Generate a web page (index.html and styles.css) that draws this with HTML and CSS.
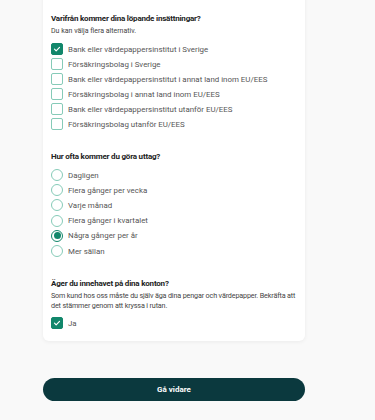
FILE: index.html
```html
<!DOCTYPE html>
<html lang="sv">
<head>
<meta charset="utf-8">
<link rel="stylesheet" href="styles.css">
</head>
<body>
<main class="page">
  <section class="card">
    <div class="group">
      <h2 class="q">Varifrån kommer dina löpande insättningar?</h2>
      <p class="hint">Du kan välja flera alternativ.</p>
      <ul class="opts">
        <li class="opt"><span class="cb on"><svg viewBox="0 0 12 12"><path d="M3 6.2l2 2 4-4.2" fill="none" stroke="#fff" stroke-width="1.4" stroke-linecap="round" stroke-linejoin="round"/></svg></span>Bank eller värdepappersinstitut i Sverige</li>
        <li class="opt"><span class="cb"></span>Försäkringsbolag i Sverige</li>
        <li class="opt"><span class="cb"></span>Bank eller värdepappersinstitut i annat land inom EU/EES</li>
        <li class="opt"><span class="cb"></span>Försäkringsbolag i annat land inom EU/EES</li>
        <li class="opt"><span class="cb"></span>Bank eller värdepappersinstitut utanför EU/EES</li>
        <li class="opt"><span class="cb"></span>Försäkringsbolag utanför EU/EES</li>
      </ul>
    </div>
    <div class="group">
      <h2 class="q">Hur ofta kommer du göra uttag?</h2>
      <ul class="opts radios">
        <li class="opt"><span class="rd"></span>Dagligen</li>
        <li class="opt"><span class="rd"></span>Flera gånger per vecka</li>
        <li class="opt"><span class="rd"></span>Varje månad</li>
        <li class="opt"><span class="rd"></span>Flera gånger i kvartalet</li>
        <li class="opt"><span class="rd on"></span>Några gånger per år</li>
        <li class="opt"><span class="rd"></span>Mer sällan</li>
      </ul>
    </div>
    <div class="group">
      <h2 class="q">Äger du innehavet på dina konton?</h2>
      <p class="desc">Som kund hos oss måste du själv äga dina pengar och värdepapper. Bekräfta att det stämmer genom att kryssa i rutan.</p>
      <ul class="opts last">
        <li class="opt"><span class="cb on"><svg viewBox="0 0 12 12"><path d="M3 6.2l2 2 4-4.2" fill="none" stroke="#fff" stroke-width="1.4" stroke-linecap="round" stroke-linejoin="round"/></svg></span>Ja</li>
      </ul>
    </div>
  </section>
  <button class="next" type="button">Gå vidare</button>
</main>
</body>
</html>
```

FILE: styles.css
```css
* { box-sizing: border-box; }
html, body { margin: 0; padding: 0; }
body {
  background: #f9f9f9;
  font-family: Roboto, "Liberation Sans", sans-serif;
  color: #333;
  width: 375px;
  height: 420px;
  overflow: hidden;
}
.page {
  width: 262px;
  margin-left: 43px;
  display: flex;
  flex-direction: column;
}
.card {
  margin-top: -10px;
  background: #fff;
  border-radius: 6px;
  box-shadow: 0 1px 4px rgba(0,0,0,0.06);
  padding: 22px 8px 10px 8px;
  display: flex;
  flex-direction: column;
  gap: 18.5px;
}
.q {
  margin: 0;
  font-size: 8px;
  line-height: 14px;
  font-weight: 700;
  letter-spacing: -0.2px;
  color: #222;
}
.hint, .desc {
  margin: 0;
  font-size: 7px;
  line-height: 11px;
  color: #444;
}
.desc {
  font-size: 7.2px;
  line-height: 9.6px;
  letter-spacing: -0.15px;
}
.opts {
  list-style: none;
  margin: 4.5px 0 0 0;
  padding: 0;
}
.radios { margin-top: 3.5px; }
.last { margin-top: 5.5px; }
.opt {
  display: flex;
  align-items: center;
  gap: 5px;
  height: 15px;
  font-size: 7.9px;
  color: #555;
}
.radios .opt { height: 15.2px; }
.cb {
  width: 12px;
  height: 12px;
  flex: none;
  border: 1px solid #86cbb8;
  border-radius: 2px;
  background: #fff;
  display: flex;
}
.cb.on {
  background: #12876b;
  border-color: #12876b;
}
.cb svg { width: 10px; height: 10px; }
.rd {
  width: 12px;
  height: 12px;
  flex: none;
  border: 1px solid #86cbb8;
  border-radius: 50%;
  background: #fff;
  display: flex;
  align-items: center;
  justify-content: center;
}
.rd.on { border-color: #12876b; }
.rd.on::after {
  content: "";
  width: 7px;
  height: 7px;
  border-radius: 50%;
  background: #12876b;
}
.next {
  margin-top: 37px;
  height: 23px;
  border: none;
  border-radius: 12px;
  background: #0b393e;
  color: #fff;
  font-family: Roboto, "Liberation Sans", sans-serif;
  font-weight: 700;
  font-size: 8px;
  padding: 0;
}
```
